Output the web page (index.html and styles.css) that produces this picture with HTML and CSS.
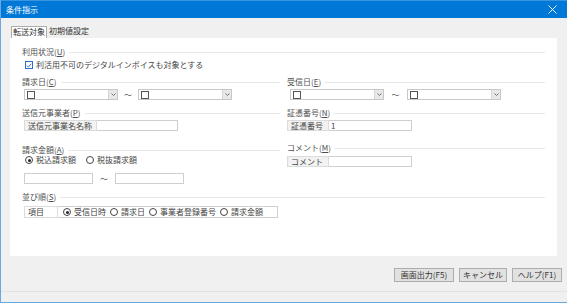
FILE: index.html
```html
<!DOCTYPE html>
<html lang="ja">
<head>
<meta charset="utf-8">
<title>条件指示</title>
<link rel="stylesheet" href="styles.css">
</head>
<body>
<div class="window">
  <div class="titlebar">
    <span class="title">条件指示</span>
    <svg class="close" width="9" height="9" viewBox="0 0 9 9"><path d="M0.5 0.5L8.5 8.5M8.5 0.5L0.5 8.5" stroke="#fff" stroke-width="1"/></svg>
  </div>
  <div class="client">
    <div class="tabs">
      <div class="tab active">転送対象</div>
      <div class="tab">初期値設定</div>
    </div>
    <div class="panel">
      <div class="grid">
        <section class="group full g-usage">
          <div class="hdr"><span>利用状況(<u>U</u>)</span></div>
          <div class="check"><span class="cb checked"><svg width="7" height="7" viewBox="0 0 7 7"><path d="M1 3.6L2.8 5.4L6 1.4" fill="none" stroke="#2a6fc9" stroke-width="1.1"/></svg></span>利活用不可のデジタルインボイスも対象とする</div>
        </section>

        <section class="group g-date">
          <div class="hdr"><span>請求日(<u>C</u>)</span></div>
          <div class="range">
            <div class="combo"><span class="cb"></span><span class="drop"><svg width="5" height="3" viewBox="0 0 5 3"><path d="M0.5 0.5L2.5 2.5L4.5 0.5" fill="none" stroke="#666" stroke-width="0.9"/></svg></span></div>
            <span class="tilde">～</span>
            <div class="combo"><span class="cb"></span><span class="drop"><svg width="5" height="3" viewBox="0 0 5 3"><path d="M0.5 0.5L2.5 2.5L4.5 0.5" fill="none" stroke="#666" stroke-width="0.9"/></svg></span></div>
          </div>
        </section>
        <section class="group g-date right">
          <div class="hdr"><span>受信日(<u>E</u>)</span></div>
          <div class="range">
            <div class="combo"><span class="cb"></span><span class="drop"><svg width="5" height="3" viewBox="0 0 5 3"><path d="M0.5 0.5L2.5 2.5L4.5 0.5" fill="none" stroke="#666" stroke-width="0.9"/></svg></span></div>
            <span class="tilde">～</span>
            <div class="combo"><span class="cb"></span><span class="drop"><svg width="5" height="3" viewBox="0 0 5 3"><path d="M0.5 0.5L2.5 2.5L4.5 0.5" fill="none" stroke="#666" stroke-width="0.9"/></svg></span></div>
          </div>
        </section>

        <section class="group g-sender">
          <div class="hdr"><span>送信元事業者(<u>P</u>)</span></div>
          <div class="field"><span class="lbl lbl-sender">送信元事業名名称</span><span class="input in-sender"></span></div>
        </section>
        <section class="group g-sender right">
          <div class="hdr"><span>証憑番号(<u>N</u>)</span></div>
          <div class="field"><span class="lbl lbl-short">証憑番号</span><span class="input in-short">1</span></div>
        </section>

        <section class="group g-amount">
          <div class="hdr"><span>請求金額(<u>A</u>)</span></div>
          <div class="radios">
            <span class="opt"><span class="rb on"></span>税込請求額</span>
            <span class="opt"><span class="rb"></span>税抜請求額</span>
          </div>
          <div class="range amt">
            <span class="input in-amt"></span>
            <span class="tilde">～</span>
            <span class="input in-amt"></span>
          </div>
        </section>
        <section class="group g-comment right">
          <div class="hdr"><span>コメント(<u>M</u>)</span></div>
          <div class="field"><span class="lbl lbl-short">コメント</span><span class="input in-short"></span></div>
        </section>

        <section class="group full g-sort">
          <div class="hdr"><span>並び順(<u>S</u>)</span></div>
          <div class="sortrow">
            <span class="lbl lbl-sort">項目</span>
            <span class="sortopts">
              <span class="opt"><span class="rb on"></span>受信日時</span>
              <span class="opt"><span class="rb"></span>請求日</span>
              <span class="opt"><span class="rb"></span>事業者登録番号</span>
              <span class="opt"><span class="rb"></span>請求金額</span>
            </span>
          </div>
        </section>
      </div>
    </div>
    <div class="footer">
      <button class="btn b1">画面出力(F5)</button>
      <button class="btn b2">キャンセル</button>
      <button class="btn b3">ヘルプ(F1)</button>
    </div>
    <div class="sep"></div>
  </div>
</div>
</body>
</html>
```

FILE: styles.css
```css
* { box-sizing: border-box; }
html, body { margin: 0; padding: 0; }
body {
  width: 567px;
  height: 303px;
  overflow: hidden;
  background: #f0f0f0;
  font-family: "Noto Sans CJK JP", "Noto Sans", sans-serif;
  font-size: 8px;
  color: #454545;
}
u { text-decoration: underline; }

.window {
  width: 567px;
  height: 303px;
  border-left: 1px solid #6aa8e0;
  border-bottom: 1px solid #6aa8e0;
  display: flex;
  flex-direction: column;
}
.titlebar {
  height: 18px;
  flex: none;
  background: #0078d7;
  border-top: 1px solid #3a95e0;
  color: #fff;
  display: flex;
  align-items: center;
  justify-content: space-between;
  padding: 0 10px 0 5px;
  font-size: 8px;
}
.title { line-height: 1; }
.close { display: block; }

.client {
  flex: 1;
  display: flex;
  flex-direction: column;
  padding: 8px 9px 0 9px;
}
.tabs {
  display: flex;
  height: 12px;
  align-items: stretch;
}
.tab {
  padding: 0 2px;
  line-height: 10px;
  height: 12px;
  color: #333;
}
.tab.active {
  margin-left: 1px;
  background: #fff;
  border: 1px solid #adadad;
  border-bottom: none;
  padding: 0 1px;
}
.panel {
  width: 547px;
  height: 218px;
  background: #fff;
  padding: 9px 12px 0 12px;
}
.grid {
  display: grid;
  grid-template-columns: 258px 258px;
  column-gap: 7px;
  align-items: start;
}
.full { grid-column: 1 / -1; }

.hdr {
  display: flex;
  align-items: center;
  height: 10px;
  line-height: 10px;
  color: #505050;
}
.hdr::after {
  content: "";
  flex: 1;
  height: 1px;
  background: #e8e8e8;
  margin-left: 4px;
}

.check {
  display: flex;
  align-items: center;
  height: 10px;
  margin-top: 3px;
  padding-left: 3px;
  line-height: 10px;
}
.cb {
  display: inline-flex;
  align-items: center;
  justify-content: center;
  width: 8px;
  height: 8px;
  border: 1px solid #555;
  background: #fff;
  flex: none;
}
.check .cb { margin-right: 3px; border-color: #2a6fc9; }

.g-date { margin-top: 7px; }
.range {
  display: flex;
  align-items: center;
  margin-top: 2px;
  padding-left: 2px;
}
.combo {
  width: 94px;
  height: 11px;
  border: 1px solid #c8c8c8;
  display: flex;
  align-items: center;
  justify-content: space-between;
  padding-left: 2px;
  background: #fff;
}
.drop {
  width: 9px;
  height: 9px;
  background: #e8e8e8;
  border-left: 1px solid #d6d6d6;
  display: flex;
  align-items: center;
  justify-content: center;
}
.tilde {
  width: 20px;
  text-align: center;
  color: #555;
  line-height: 10px;
}
.right .range { padding-left: 3px; }
.right .tilde { width: 23px; }

.g-sender { margin-top: 8px; }
.field {
  display: flex;
  margin-top: 2px;
  padding-left: 2px;
  height: 11px;
}
.right .field { padding-left: 0; }
.lbl {
  background: #f2f2f2;
  border: 1px solid #dcdcdc;
  line-height: 9px;
  padding-left: 3px;
  color: #454545;
}
.lbl-sender { width: 73px; }
.lbl-short { width: 42px; }
.input {
  display: block;
  height: 11px;
  background: #fff;
  border: 1px solid #cfcfcf;
  line-height: 9px;
  padding-left: 2px;
}
.field .input { border-left: none; }
.in-sender { width: 81px; }
.in-short { width: 83px; }

.g-amount { margin-top: 14px; }
.g-comment { margin-top: 12px; }
.g-comment .field { margin-top: 3px; }
.radios {
  display: flex;
  align-items: center;
  height: 10px;
  margin-top: 0;
  padding-left: 3px;
}
.opt {
  display: inline-flex;
  align-items: center;
  line-height: 10px;
  margin-right: 10px;
}
.rb {
  width: 8px;
  height: 8px;
  border: 1px solid #444;
  border-radius: 50%;
  background: #fff;
  margin-right: 3px;
  position: relative;
  flex: none;
}
.rb.on::after {
  content: "";
  position: absolute;
  left: 1.5px;
  top: 1.5px;
  width: 3px;
  height: 3px;
  border-radius: 50%;
  background: #222;
}
.range.amt { margin-top: 8px; }
.in-amt { width: 69px; }
.amt .tilde { width: 22px; }

.g-sort { margin-top: 8px; }
.sortrow {
  display: flex;
  margin-top: 4px;
  padding-left: 2px;
  height: 12px;
}
.lbl-sort {
  width: 34px;
  background: #fff;
  line-height: 10px;
}
.sortopts {
  width: 220px;
  border: 1px solid #cfcfcf;
  border-left: none;
  display: flex;
  align-items: center;
  padding-left: 5px;
}
.sortopts .opt { margin-right: 4px; }

.footer {
  display: flex;
  justify-content: flex-end;
  gap: 5px;
  margin-top: 12px;
  margin-right: -4px;
}
.btn {
  height: 14px;
  padding: 0;
  border: 1px solid #adadad;
  background: #e1e1e1;
  font-family: inherit;
  font-size: 8px;
  color: #333;
  line-height: 12px;
}
.b1 { width: 60px; }
.b2 { width: 48px; }
.b3 { width: 50px; }
.sep {
  height: 1px;
  background: #e2e2e2;
  margin: 9px -9px 0 -9px;
}
```
